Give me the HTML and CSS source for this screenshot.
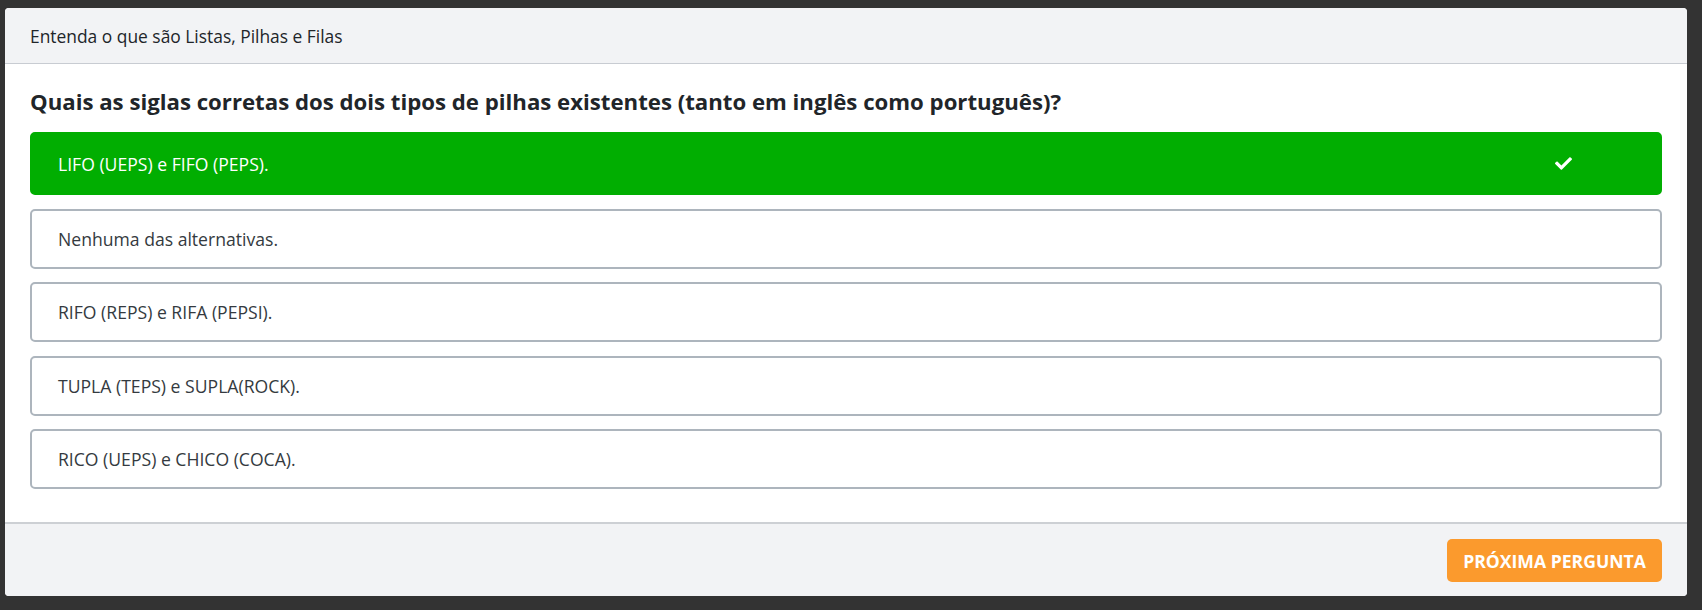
FILE: index.html
```html
<!DOCTYPE html>
<html lang="pt-BR">
<head>
<meta charset="utf-8">
<title>Quiz</title>
<link rel="stylesheet" href="styles.css">
</head>
<body>
<div class="card">
  <div class="card-header">Entenda o que são Listas, Pilhas e Filas</div>
  <div class="card-body">
    <h2 class="question">Quais as siglas corretas dos dois tipos de pilhas existentes (tanto em inglês como português)?</h2>
    <ul class="options">
      <li class="option correct">
        <span>LIFO (UEPS) e FIFO (PEPS).</span>
        <svg class="check" viewBox="0 0 512 512" aria-hidden="true"><path fill="#fff" d="M173.898 439.404l-166.4-166.4c-9.997-9.997-9.997-26.206 0-36.204l36.203-36.204c9.997-9.998 26.207-9.998 36.204 0L192 312.69 432.095 72.596c9.997-9.997 26.207-9.997 36.204 0l36.203 36.204c9.997 9.997 9.997 26.206 0 36.204l-294.4 294.401c-9.998 9.997-26.207 9.997-36.204-.001z"/></svg>
      </li>
      <li class="option"><span>Nenhuma das alternativas.</span></li>
      <li class="option"><span>RIFO (REPS) e RIFA (PEPSI).</span></li>
      <li class="option"><span>TUPLA (TEPS) e SUPLA(ROCK).</span></li>
      <li class="option"><span>RICO (UEPS) e CHICO (COCA).</span></li>
    </ul>
  </div>
  <div class="card-footer">
    <button class="btn-next" type="button">PRÓXIMA PERGUNTA</button>
  </div>
</div>
</body>
</html>
```

FILE: styles.css
```css
html, body {
  margin: 0;
  height: 100%;
}
body {
  background: #333333;
  padding: 8px 15px 14px 5px;
  box-sizing: border-box;
  font-family: "Open Sans", "Noto Sans", sans-serif;
  color: #343a40;
}
.card {
  background: #ffffff;
  border-radius: 4px;
  overflow: hidden;
  display: flex;
  flex-direction: column;
  height: 588px;
}
.card-header {
  height: 55px;
  background: #f2f3f5;
  border-bottom: 1px solid #c8ccd2;
  display: flex;
  align-items: center;
  padding: 0 25px;
  font-size: 17.4px;
  color: #212529;
}
.card-body {
  padding: 23px 25px 33px 25px;
}
.question {
  margin: 0 0 15px 0;
  font-size: 22.2px;
  line-height: 30px;
  font-weight: 700;
  color: #212529;
}
.options {
  list-style: none;
  margin: 0;
  padding: 0;
  display: flex;
  flex-direction: column;
  gap: 13.5px;
}
.option {
  height: 60px;
  box-sizing: border-box;
  border: 2px solid #adb5bd;
  border-radius: 5px;
  padding: 0 26px;
  display: flex;
  align-items: center;
  justify-content: space-between;
  font-size: 17.6px;
  color: #343a40;
}
.option.correct {
  height: 63px;
  background: #01ae01;
  border-color: #01ae01;
  color: #ffffff;
}
.check {
  width: 17px;
  height: 17px;
  margin-right: 62px;
}
.card-footer {
  flex: 1;
  background: #f2f3f5;
  border-top: 2px solid #cdd0d4;
  display: flex;
  justify-content: flex-end;
  align-items: flex-start;
  padding: 15px 25px 0 0;
}
.btn-next {
  height: 43px;
  width: 215px;
  border: none;
  border-radius: 5px;
  background: #fb9a2d;
  color: #ffffff;
  font-family: "Open Sans", "Noto Sans", sans-serif;
  font-weight: 700;
  font-size: 17.6px;
  padding: 0;
  cursor: pointer;
}
```
